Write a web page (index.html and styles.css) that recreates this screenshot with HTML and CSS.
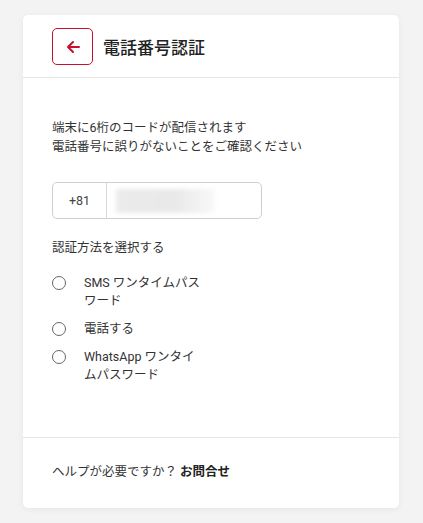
FILE: index.html
```html
<!DOCTYPE html>
<html lang="ja">
<head>
<meta charset="utf-8">
<link rel="stylesheet" href="styles.css">
</head>
<body>
<div class="card">
  <div class="header">
    <button class="back" aria-label="戻る">
      <svg width="16" height="14" viewBox="0 0 16 14"><path d="M14 7H3M8 2L3 7l5 5" fill="none" stroke="#c8102e" stroke-width="2" stroke-linecap="round" stroke-linejoin="round"/></svg>
    </button>
    <h1 class="title">電話番号認証</h1>
  </div>
  <div class="body">
    <p class="desc">端末に6桁のコードが配信されます<br>電話番号に誤りがないことをご確認ください</p>
    <div class="phone">
      <div class="prefix">+81</div>
      <div class="number"><div class="blur"></div></div>
    </div>
    <p class="label">認証方法を選択する</p>
    <div class="options">
      <label class="option"><span class="radio"></span><span class="text">SMS ワンタイムパスワード</span></label>
      <label class="option"><span class="radio"></span><span class="text">電話する</span></label>
      <label class="option"><span class="radio"></span><span class="text">WhatsApp ワンタイムパスワード</span></label>
    </div>
  </div>
  <div class="footer">ヘルプが必要ですか？ <strong>お問合せ</strong></div>
</div>
</body>
</html>
```
FILE: styles.css
```css
* { box-sizing: border-box; }
html, body { margin: 0; }
body {
  background: #f3f3f3;
  padding: 15px 24px 16px 23px;
  font-family: "Roboto", "Noto Sans CJK JP", sans-serif;
  color: #333;
  font-size: 12.5px;
}
.card {
  width: 376px;
  background: #fff;
  border-radius: 5px;
  box-shadow: 0 1px 6px rgba(0,0,0,0.06);
}
.header {
  display: flex;
  align-items: center;
  gap: 10px;
  padding: 13px 29px 12px;
  border-bottom: 1px solid #e6e6e6;
}
.back {
  width: 41px;
  height: 37px;
  border: 1px solid #c8102e;
  border-radius: 5px;
  background: #fff;
  display: flex;
  align-items: center;
  justify-content: center;
  padding: 0;
}
.title {
  margin: 0;
  font-size: 17px;
  font-weight: 500;
  color: #222;
}
.body {
  padding: 40px 29px 53px;
}
.desc {
  margin: 0;
  line-height: 19px;
}
.phone {
  margin-top: 26px;
  width: 210px;
  height: 37px;
  border: 1px solid #cfcfcf;
  border-radius: 5px;
  display: flex;
}
.prefix {
  width: 54px;
  border-right: 1px solid #d8d8d8;
  display: flex;
  align-items: center;
  justify-content: center;
  color: #444;
}
.number {
  flex: 1;
  display: flex;
  align-items: center;
  padding-left: 9px;
}
.blur {
  width: 98px;
  height: 24px;
  background: linear-gradient(90deg, #ebebeb 0%, #e9e9e9 60%, #f8f8f8 100%);
  filter: blur(2px);
}
.label {
  margin: 19px 0 0;
  line-height: 20px;
}
.options {
  margin-top: 16px;
  display: flex;
  flex-direction: column;
  gap: 10px;
}
.option {
  display: flex;
  align-items: flex-start;
  gap: 18px;
  line-height: 18px;
}
.radio {
  width: 14px;
  height: 14px;
  margin-top: 2px;
  border: 1px solid #666;
  border-radius: 50%;
  flex: none;
}
.text {
  max-width: 120px;
}
.footer {
  border-top: 1px solid #e6e6e6;
  padding: 24px 29px 26px;
  line-height: 20px;
}
.footer strong {
  color: #222;
  font-weight: 700;
}
```
